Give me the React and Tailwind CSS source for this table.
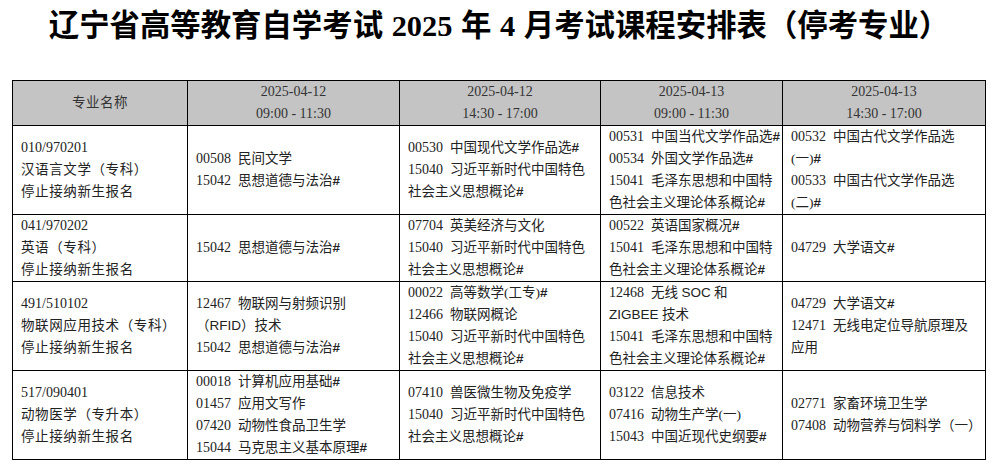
const rows=[
  {
    major:["010/970201","汉语言文学（专科）","停止接纳新生报名"],
    cells:[
      [["00508","民间文学"],["15042","思想道德与法治#"]],
      [["00530","中国现代文学作品选#"],["15040","习近平新时代中国特色"],"社会主义思想概论#"],
      [["00531","中国当代文学作品选#"],["00534","外国文学作品选#"],["15041","毛泽东思想和中国特"],"色社会主义理论体系概论#"],
      [["00532","中国古代文学作品选"],"(一)#",["00533","中国古代文学作品选"],"(二)#"],
    ],
  },
  {
    major:["041/970202","英语（专科）","停止接纳新生报名"],
    cells:[
      [["15042","思想道德与法治#"]],
      [["07704","英美经济与文化"],["15040","习近平新时代中国特色"],"社会主义思想概论#"],
      [["00522","英语国家概况#"],["15041","毛泽东思想和中国特"],"色社会主义理论体系概论#"],
      [["04729","大学语文#"]],
    ],
  },
  {
    major:["491/510102","物联网应用技术（专科）","停止接纳新生报名"],
    cells:[
      [["12467","物联网与射频识别"],"（RFID）技术",["15042","思想道德与法治#"]],
      [["00022","高等数学(工专)#"],["12466","物联网概论"],["15040","习近平新时代中国特色"],"社会主义思想概论#"],
      [["12468","无线 SOC 和"],"ZIGBEE 技术",["15041","毛泽东思想和中国特"],"色社会主义理论体系概论#"],
      [["04729","大学语文#"],["12471","无线电定位导航原理及"],"应用"],
    ],
  },
  {
    major:["517/090401","动物医学（专升本）","停止接纳新生报名"],
    cells:[
      [["00018","计算机应用基础#"],["01457","应用文写作"],["07420","动物性食品卫生学"],["15044","马克思主义基本原理#"]],
      [["07410","兽医微生物及免疫学"],["15040","习近平新时代中国特色"],"社会主义思想概论#"],
      [["03122","信息技术"],["07416","动物生产学(一)"],["15043","中国近现代史纲要#"]],
      [["02771","家畜环境卫生学"],["07408","动物营养与饲料学（一）"]],
    ],
  },
];

const heads=[
  ["2025-04-12","09:00 - 11:30"],
  ["2025-04-12","14:30 - 17:00"],
  ["2025-04-13","09:00 - 11:30"],
  ["2025-04-13","14:30 - 17:00"],
];

// latin words (RFID, SOC, ZIGBEE) and "#" use a sans face like the original
function Rich({text}){
  const parts=text.split(/([A-Z]{2,}|#)/);
  return parts.map((p,i)=>{
    if(p==="#")return<span key={i} className="font-bold font-['Liberation_Sans',sans-serif]">#</span>;
    if(/^[A-Z]{2,}$/.test(p))return<span key={i} className="font-['Liberation_Sans',sans-serif]">{p}</span>;
    return<span key={i}>{p}</span>;
  });
}

function Line({line}){
  if(typeof line==="string")return<div className="whitespace-nowrap"><Rich text={line}/></div>;
  return<div className="whitespace-nowrap">
    <span className="text-[14px]">{line[0]}</span><span className="inline-block w-[7px]"/><Rich text={line[1]}/>
  </div>;
}

export default function App(){
  return<div className="w-[998px] h-[464px] bg-white overflow-hidden font-['Liberation_Serif','Noto_Sans_CJK_SC',serif] text-[#222]">
    <h1 className="h-[52px] pt-[6px] text-center text-[30.4px] leading-[40px] font-bold text-black [word-spacing:1px]">辽宁省高等教育自学考试 2025 年 4 月考试课程安排表（停考专业）</h1>
    <div className="pl-[12px] pt-[28px]">
      <table className="table-fixed w-[973px] border-collapse text-[13.5px] leading-[22px]">
        <colgroup>
          <col className="w-[175px]"/>
          <col className="w-[212px]"/>
          <col className="w-[201px]"/>
          <col className="w-[182px]"/>
          <col className="w-[203px]"/>
        </colgroup>
        <thead>
          <tr className="bg-[#c4c4c4] text-[#333]">
            <th className="h-[44px] border border-black font-normal text-center align-middle tracking-[0.5px]">专业名称</th>
            {heads.map((h,i)=><th key={i} className="h-[44px] border border-black font-normal text-center align-middle text-[14px]">
              <div>{h[0]}</div>
              <div>{h[1]}</div>
            </th>)}
          </tr>
        </thead>
        <tbody>
          {rows.map((r,i)=><tr key={i}>
            <td className={`${i===1?"h-[66px]":"h-[88px]"} border border-black px-[8px] align-middle`}>
              <div className="whitespace-nowrap text-[14px]">{r.major[0]}</div>
              <div className="whitespace-nowrap tracking-[0.6px]">{r.major[1]}</div>
              <div className="whitespace-nowrap tracking-[0.6px]">{r.major[2]}</div>
            </td>
            {r.cells.map((c,j)=><td key={j} className="border border-black px-[8px] align-middle overflow-hidden">
              {c.map((l,k)=><Line key={k} line={l}/>)}
            </td>)}
          </tr>)}
        </tbody>
      </table>
    </div>
  </div>;
}
